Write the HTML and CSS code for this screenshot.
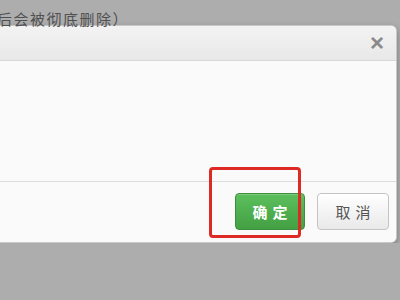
FILE: index.html
```html
<!DOCTYPE html>
<html lang="zh-CN">
  <head>
    <meta charset="UTF-8" />
    <meta name="viewport" content="width=device-width, initial-scale=1.0" />
    <title>确认删除</title>
    <link rel="stylesheet" href="styles.css">
  </head>
  <body>
    <div class="page-text">后会被彻底删除）</div>

    <div class="modal">
      <div class="modal-header">
        <button class="close-btn" type="button">&times;</button>
      </div>
      <div class="modal-body"></div>
      <div class="modal-footer">
        <button class="btn btn-success">确定</button>
        <button class="btn btn-default">取消</button>
      </div>
    </div>

    <div class="highlight"></div>
  </body>
</html>
```

FILE: styles.css
```css
body {
  margin: 0;
  background: #adadad;
  font-family: "Noto Sans CJK SC", "Noto Sans", sans-serif;
  overflow: hidden;
}

.page-text {
  height: 25px;
  margin-left: -3px;
  padding-top: 11px;
  box-sizing: border-box;
  font-size: 15px;
  line-height: 16px;
  letter-spacing: 1.5px;
  color: #505050;
  white-space: nowrap;
}

.modal {
  width: 416px;
  margin-left: -21px;
  background: #fafafa;
  border: 1px solid rgba(0, 0, 0, 0.2);
  border-radius: 6px;
  box-shadow: 0 3px 6px rgba(0, 0, 0, 0.3);
  overflow: hidden;
}

.modal-header {
  height: 34px;
  display: flex;
  justify-content: flex-end;
  align-items: center;
  padding-right: 12px;
  background: linear-gradient(#f3f3f3, #e8e8e8);
  border-bottom: 1px solid #d8d8d8;
}

.close-btn {
  border: none;
  background: none;
  padding: 0;
  font-family: "Liberation Sans", Arial, sans-serif;
  font-size: 24px;
  font-weight: bold;
  line-height: 20px;
  color: #8a8a8a;
  cursor: pointer;
}

.modal-body {
  height: 120px;
}

.modal-footer {
  height: 61px;
  box-sizing: border-box;
  display: flex;
  justify-content: flex-end;
  align-items: flex-start;
  gap: 12px;
  padding: 11px 7px 0 0;
  border-top: 1px solid #dcdcdc;
  background: #fafafa;
}

.btn {
  height: 37px;
  border-radius: 4px;
  font-family: "Noto Sans CJK SC", sans-serif;
  font-size: 15px;
  letter-spacing: 5px;
  padding: 0 0 0 5px;
  cursor: pointer;
}

.btn-success {
  width: 70px;
  color: #fff;
  font-weight: bold;
  background: linear-gradient(#5cbf5c, #43a043);
  border: 1px solid #3d8f3d;
  box-shadow: inset 0 1px 0 rgba(255, 255, 255, 0.2);
}

.btn-default {
  width: 72px;
  color: #555;
  background: linear-gradient(#ffffff, #e9e9e9);
  border: 1px solid #c4c4c4;
}

.highlight {
  position: absolute;
  left: 209px;
  top: 167px;
  width: 86px;
  height: 65px;
  border: 3px solid #de2a24;
  border-radius: 4px;
}
```
